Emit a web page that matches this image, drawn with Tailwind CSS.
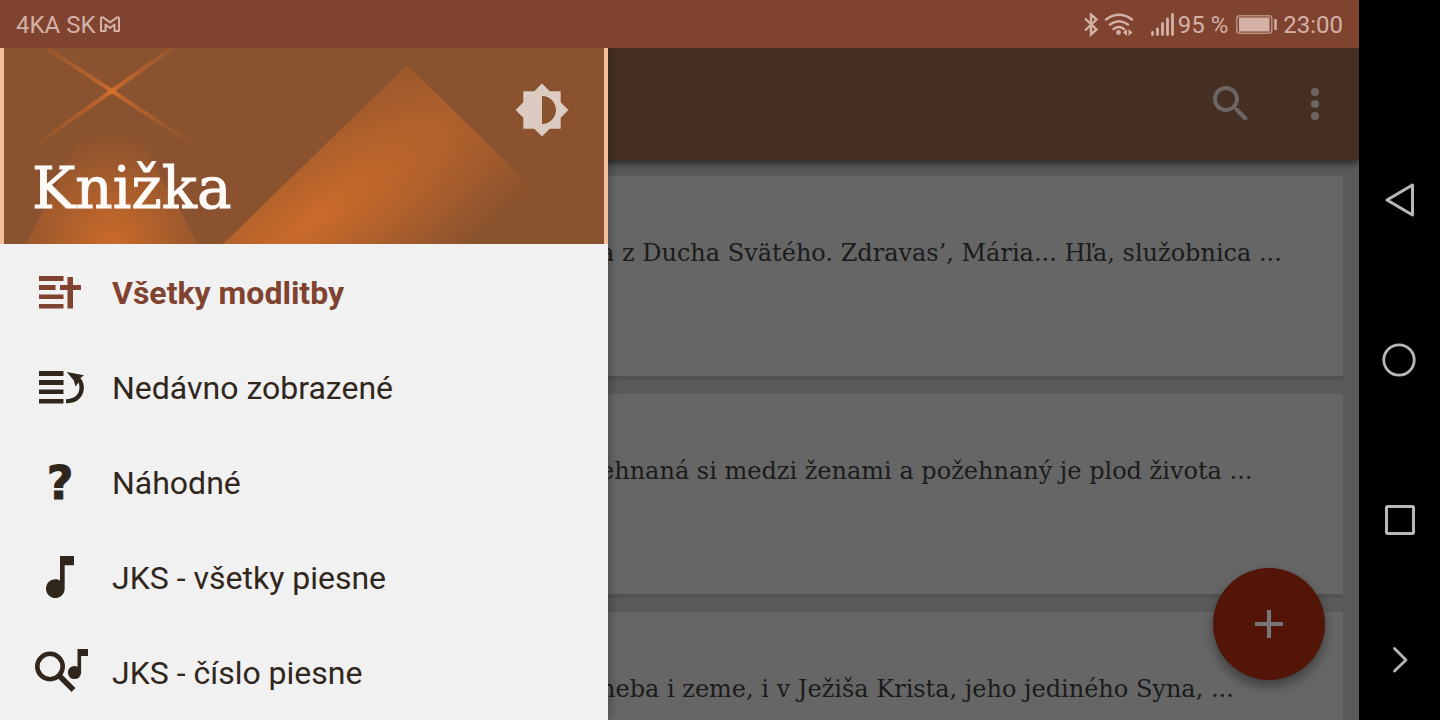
<!DOCTYPE html>
<html lang="sk">
<head>
<meta charset="utf-8">
<meta name="viewport" content="width=device-width, initial-scale=1">
<title>Knižka</title>
<script src="https://cdn.jsdelivr.net/npm/@tailwindcss/browser@4"></script>
</head>
<body class="flex h-screen overflow-hidden bg-black font-['Roboto','Liberation_Sans',sans-serif]">
<div class="flex min-w-0 flex-1 flex-col">

  <!-- Status bar -->
  <header class="flex h-12 shrink-0 items-center justify-between bg-[#804330] px-4 pt-0.5 text-2xl text-[#d3b1a7]">
    <div class="flex items-center gap-1">
      <span>4KA SK</span>
      <svg class="h-5 w-6" viewBox="0 0 24 20" fill="none" stroke="currentColor" stroke-width="2" stroke-linejoin="round" aria-hidden="true"><path d="M2 3.500Q2 1.600 4 2.400L11 7.400 18 2.400Q20 1.600 20 3.500V16H15.500V9.500L11 13 6.500 9.500V16H2Z"/></svg>
    </div>
    <div class="flex items-center">
      <svg class="h-6 w-[92px]" viewBox="0 0 92 24" fill="none" stroke="currentColor" stroke-width="2.400" aria-hidden="true">
        <path d="M3 5.500 14.500 16.500 9 21.500V1.500L14.500 6.500 3 17.500"/>
        <path d="M24 6.500Q37 -3 50 6.500M28 11.500Q37 5 46 11.500M31.500 16Q37 12 42 16" stroke-linecap="round"/>
        <circle cx="36.500" cy="19.500" r="2.400" fill="currentColor" stroke="none"/>
        <path d="M45 16v7l-4-3.500zM46.500 16v7l4-3.500z" fill="currentColor" stroke="none"/>
        <path d="M70.500 19.500v2M75.500 16v5.500M80.500 10.500v11M85.500 6v15.500M90.500 1.500v20" stroke-width="2.800" stroke-linecap="round"/>
      </svg>
      <span class="ml-1">95 %</span>
      <svg class="ml-2 h-5 w-[41px]" viewBox="0 0 41 20" fill="none" stroke="currentColor" aria-hidden="true">
        <rect x="0.800" y="0.800" width="35" height="17.400" rx="3" stroke-width="1.500" opacity=".7"/>
        <rect x="3" y="2.500" width="30.500" height="14" fill="currentColor" stroke="none"/>
        <path d="M39.500 4v11" stroke-width="2.500"/>
      </svg>
      <span class="ml-1.5">23:00</span>
    </div>
  </header>

  <div class="relative flex min-h-0 flex-1 flex-col overflow-hidden bg-[#5a5a5a]">
    <!-- Toolbar -->
    <div class="z-10 flex h-28 shrink-0 items-center justify-end gap-9 bg-[#452f22] pr-5 text-[#6c6765] shadow-[0_3px_8px_rgba(0,0,0,0.6)]">
      <button type="button" aria-label="Hľadať" class="size-12">
        <svg class="size-12" viewBox="0 0 24 24" fill="currentColor"><path d="M15.500 14h-.79l-.28-.27C15.410 12.590 16 11.110 16 9.500 16 5.910 13.090 3 9.500 3S3 5.910 3 9.500 5.910 16 9.500 16c1.610 0 3.090-.59 4.230-1.570l.27.28v.79l5 4.990L20.490 19l-4.990-5zm-6 0C7.010 14 5 11.990 5 9.500S7.010 5 9.500 5 14 7.010 14 9.500 11.990 14 9.500 14z"/></svg>
      </button>
      <button type="button" aria-label="Ďalšie možnosti" class="size-12">
        <svg class="size-12" viewBox="0 0 24 24" fill="currentColor"><circle cx="12" cy="6" r="2"/><circle cx="12" cy="12" r="2"/><circle cx="12" cy="18" r="2"/></svg>
      </button>
    </div>

    <!-- Prayer cards -->
    <main class="flex flex-col gap-3.5 px-4 pt-4 font-['Roboto_Slab','DejaVu_Serif',serif] text-2xl whitespace-nowrap text-[#1b1b1b]">
      <article class="h-[204px] shrink-0 border-b-4 border-[#525252] bg-[#666666] pt-[61px] pl-[584px]"><p>a z Ducha Svätého. Zdravas’, Mária... Hľa, služobnica ...</p></article>
      <article class="h-[204px] shrink-0 border-b-4 border-[#525252] bg-[#666666] pt-[61px] pl-[584px]"><p>ehnaná si medzi ženami a požehnaný je plod života ...</p></article>
      <article class="h-[204px] shrink-0 border-b-4 border-[#525252] bg-[#666666] pt-[61px] pl-[584px]"><p>neba i zeme, i v Ježiša Krista, jeho jediného Syna, ...</p></article>
    </main>

    <button type="button" aria-label="Pridať" class="absolute right-[34px] bottom-10 flex size-28 items-center justify-center rounded-full bg-[#521508] text-[#777777] shadow-[0_6px_12px_rgba(0,0,0,0.4)]">
      <svg class="size-12" viewBox="0 0 24 24" fill="currentColor"><path d="M19 13h-6v6h-2v-6H5v-2h6V5h2v6h6v2z"/></svg>
    </button>

    <!-- Navigation drawer -->
    <aside class="absolute inset-y-0 left-0 z-20 w-[608px] bg-[#f1f1f1] text-[#30261c] shadow-[0_0_12px_rgba(0,0,0,0.35)]">
      <div class="relative h-[196px] overflow-hidden border-x-4 border-[#f8bf9e] bg-[#8a522e]">
        <svg class="absolute inset-0 h-full w-full" viewBox="4 0 600 196" preserveAspectRatio="none" aria-hidden="true">
          <defs>
            <radialGradient id="ray" gradientUnits="userSpaceOnUse" cx="112" cy="43" r="100"><stop offset="0" stop-color="#d8702e"/><stop offset=".1" stop-color="#c0662d"/><stop offset="1" stop-color="#b5622d" stop-opacity="0"/></radialGradient>
            <radialGradient id="cone" gradientUnits="userSpaceOnUse" cx="112" cy="196" r="112"><stop offset="0" stop-color="#ca6a2a"/><stop offset="1" stop-color="#ca6a2a" stop-opacity="0"/></radialGradient>
            <radialGradient id="peak" gradientUnits="userSpaceOnUse" cx="0" cy="0" r="1" gradientTransform="translate(316 170) rotate(-35) scale(370 116)"><stop offset="0" stop-color="#cb6b2a"/><stop offset="1" stop-color="#cb6b2a" stop-opacity="0"/></radialGradient>
          </defs>
          <path d="M41 -4 198 100M178 -4 26 104" fill="none" stroke="url(#ray)" stroke-width="4"/>
          <path d="M84 84H137L198 196H26Z" fill="url(#cone)"/>
          <path d="M407 17 223 196H590Z" fill="url(#peak)"/>
        </svg>
        <div class="relative flex h-full justify-between pr-[34px] pl-7">
          <h1 class="self-end pb-[22px] font-['Roboto_Slab','DejaVu_Serif',serif] text-[58px] leading-[68px] text-[#fdfaf8] [-webkit-text-stroke:1px_#fdfaf8]">Knižka</h1>
          <button type="button" aria-label="Prepnúť jas" class="mt-[34px] size-14 text-[#dccbc1]">
            <svg class="size-14" viewBox="0 0 24 24" fill="currentColor"><path d="M20 15.310 23.310 12 20 8.690V4h-4.690L12 .69 8.690 4H4v4.690L.69 12 4 15.310V20h4.690L12 23.310 15.310 20H20v-4.690zM12 18V6c3.310 0 6 2.690 6 6s-2.690 6-6 6z"/></svg>
          </button>
        </div>
      </div>
      <nav class="flex flex-col pt-px text-[32px]">
        <a href="#vsetky" aria-current="page" class="flex h-[95px] items-center gap-4 pl-8 font-bold text-[#804330]">
          <svg class="h-14 w-16" viewBox="0 0 64 56" fill="currentColor" aria-hidden="true"><path d="M7 11H31.500V16H7ZM7 20H23.500V25H7ZM7 29.500H31.500V34H7ZM7 39H31.500V43.500H7ZM35.500 12H41V20H49V25H41V43.500H35.500V25H28V20H35.500Z"/></svg>
          <span>Všetky modlitby</span>
        </a>
        <a href="#nedavno" class="flex h-[95px] items-center gap-4 pl-8">
          <svg class="h-14 w-16" viewBox="0 0 64 56" fill="currentColor" aria-hidden="true"><path d="M7 11H31.500V16H7ZM7 20H31.500V25H7ZM7 29.500H31.500V34H7ZM7 39H31.500V43.500H7Z"/><path d="M34.700 12 52 15.300 48.500 18C52 22.500 52.700 28 51 33 48.500 39.500 43 43.500 34 43.200V39.200C41 39 45.500 36 47 31 47.800 28 47.600 25 46.500 22.500L43.700 26.500 41.500 20Z"/></svg>
          <span>Nedávno zobrazené</span>
        </a>
        <a href="#nahodne" class="flex h-[95px] items-center gap-4 pl-8">
          <span aria-hidden="true" class="w-16 pr-2 text-center font-['DejaVu_Sans',sans-serif] text-[46px] leading-[56px] font-bold [-webkit-text-stroke:1px]">?</span>
          <span>Náhodné</span>
        </a>
        <a href="#jks" class="flex h-[95px] items-center gap-4 pl-8">
          <svg class="h-14 w-16" viewBox="0 0 64 56" fill="currentColor" aria-hidden="true"><path transform="translate(0 -1) scale(2.333)" d="M12 3v10.550c-.59-.34-1.270-.55-2-.55-2.210 0-4 1.790-4 4s1.790 4 4 4 4-1.790 4-4V7h4V3h-6z"/></svg>
          <span>JKS - všetky piesne</span>
        </a>
        <a href="#jks-cislo" class="flex h-[95px] items-center gap-4 pl-8">
          <svg class="h-14 w-16" viewBox="0 0 64 56" fill="currentColor" aria-hidden="true"><circle cx="18" cy="21.500" r="12.700" fill="none" stroke="currentColor" stroke-width="4.600"/><path d="M27.500 31 41.500 45" stroke="currentColor" stroke-width="5.500"/><circle cx="42.500" cy="27.500" r="6.600"/><path d="M45.500 4H56V11H49.100V27.500H45.500Z"/></svg>
          <span>JKS - číslo piesne</span>
        </a>
      </nav>
    </aside>
  </div>
</div>

<!-- System navigation -->
<nav class="flex w-[81px] shrink-0 flex-col bg-black pt-[120px] text-[#b8b8b8]">
  <button type="button" aria-label="Späť" class="flex h-40 items-center justify-center"><svg class="size-10" viewBox="0 0 40 40" fill="none" stroke="currentColor" stroke-width="3" stroke-linejoin="round"><path d="M32.500 5V35L7 20Z"/></svg></button>
  <button type="button" aria-label="Domov" class="flex h-40 items-center justify-center"><svg class="size-10" viewBox="0 0 40 40" fill="none" stroke="currentColor" stroke-width="2.800"><circle cx="19" cy="20" r="15.200"/></svg></button>
  <button type="button" aria-label="Posledné aplikácie" class="flex h-40 items-center justify-center"><svg class="size-10" viewBox="0 0 40 40" fill="none" stroke="currentColor" stroke-width="3"><rect x="6.500" y="6.500" width="27" height="27" rx="1"/></svg></button>
  <button type="button" aria-label="Skryť" class="flex h-[120px] items-center justify-center"><svg class="size-10" viewBox="0 0 40 40" fill="none" stroke="currentColor" stroke-width="2.800" stroke-linecap="round" stroke-linejoin="round"><path d="M14.500 8.500 26 20 14.500 31"/></svg></button>
</nav>
</body>
</html>
